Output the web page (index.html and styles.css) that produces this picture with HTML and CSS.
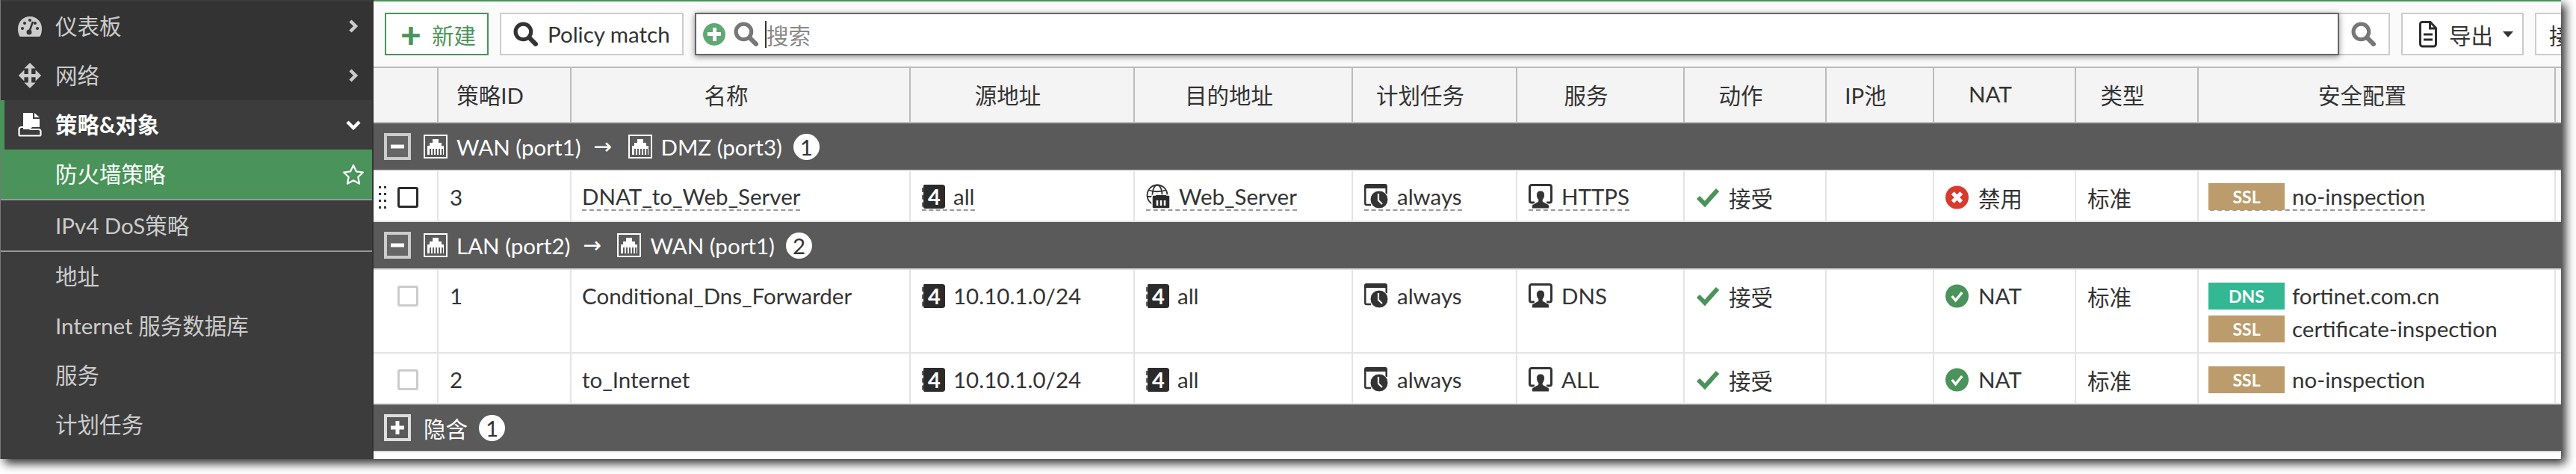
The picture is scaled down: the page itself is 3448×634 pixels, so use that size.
FILE: index.html
```html
<!DOCTYPE html>
<html lang="zh">
<head>
  <meta charset="UTF-8" />
  <title>防火墙策略</title>
  <link rel="stylesheet" href="styles.css">
</head>
<body>

  <!-- Icons -->
  <svg class="defs" width="0" height="0">
    <symbol id="i-gauge" viewBox="0 0 32 30">
      <path fill="currentColor" d="M16 2C7 2 0 9 0 18c0 4 .6 7 1.800 9.500.5 1 1.200 1.500 2.200 1.500h24c1 0 1.700-.5 2.200-1.500C31.400 25 32 22 32 18 32 9 25 2 16 2z"/>
      <g fill="#333"><circle cx="6" cy="18" r="2"/><circle cx="9" cy="11" r="2"/><circle cx="26" cy="18" r="2"/><circle cx="16" cy="7" r="2"/><circle cx="23" cy="11" r="2"/><circle cx="15" cy="23" r="3.500"/></g>
      <path stroke="#333" stroke-width="2.500" d="M15 23l5-14"/>
    </symbol>
    <symbol id="i-move" viewBox="0 0 32 36">
      <path stroke="currentColor" stroke-width="4.500" d="M16 4v28M4 18h24"/>
      <path fill="currentColor" d="M16 0l8 8H8zM16 36l-8-8h16zM0 18l8-8v16zM32 18l-8 8V10z"/>
    </symbol>
    <symbol id="i-policy" viewBox="0 0 32 32">
      <path fill="currentColor" d="M7 0h13v8h9v11H19l-3 3H7zM22 0l7 6h-7z"/>
      <path fill="none" stroke="currentColor" stroke-width="2.200" d="M1.500 29V22a3 3 0 0 1 3-3h9l3 3h11a3 3 0 0 1 3 3v4a1.500 1.500 0 0 1-1.500 1.500H3A1.500 1.500 0 0 1 1.500 29z"/>
    </symbol>
    <symbol id="i-right" viewBox="0 0 14 18">
      <path fill="none" stroke="currentColor" stroke-width="4.500" d="M3 2l7 7-7 7"/>
    </symbol>
    <symbol id="i-down" viewBox="0 0 20 14">
      <path fill="none" stroke="currentColor" stroke-width="4.500" d="M2 3l8 8 8-8"/>
    </symbol>
    <symbol id="i-star" viewBox="0 0 30 28">
      <path fill="none" stroke="currentColor" stroke-width="2.200" stroke-linejoin="round" d="M15 2l3.900 8.300 9 1.200-6.600 6.300 1.700 8.900-8-4.400-8 4.400 1.700-8.900-6.600-6.300 9-1.200z"/>
    </symbol>
    <symbol id="i-search" viewBox="0 0 32 32">
      <circle cx="13" cy="13" r="10" fill="none" stroke="currentColor" stroke-width="5"/>
      <path stroke="currentColor" stroke-width="6" stroke-linecap="round" d="M21 21l8 8"/>
    </symbol>
    <symbol id="i-port" viewBox="0 0 32 32">
      <rect x="1" y="1" width="30" height="30" fill="none" stroke="#fff" stroke-width="2"/>
      <path fill="#fff" d="M5 15h3v-4h4V6h8v5h4v4h3v12H5z"/>
      <path stroke="#5a5a5a" stroke-width="2" d="M9 19v8M13 19v8M17 19v8M21 19v8M25 19v8"/>
    </symbol>
    <symbol id="i-globe" viewBox="0 0 32 33">
      <g fill="none" stroke="#333" stroke-width="1.800">
        <circle cx="15" cy="15" r="13.500"/>
        <ellipse cx="15" cy="15" rx="6.500" ry="13.500"/>
        <path d="M3 8c7 3 17 3 24 0M1.500 17h27"/>
      </g>
      <rect x="8" y="15" width="24" height="18" rx="2" fill="#2b2b2b" stroke="#fff" stroke-width="1.500"/>
      <path stroke="#fff" stroke-width="2.500" d="M15 22v7M20 22v7M25 22v7"/>
      <path fill="#2b2b2b" d="M13 15h14v4H13z"/>
    </symbol>
    <symbol id="i-sched" viewBox="0 0 32 33">
      <path fill="#333" d="M3 0h25a3 3 0 0 1 3 3v3H0V3a3 3 0 0 1 3-3z"/>
      <path fill="none" stroke="#333" stroke-width="2.500" d="M1.300 5v21a2 2 0 0 0 2 2H9M29.700 5v8"/>
      <circle cx="20" cy="21" r="12" fill="#333" stroke="#fff" stroke-width="1"/>
      <path fill="none" stroke="#fff" stroke-width="2.200" d="M19 13v9l5 5"/>
    </symbol>
    <symbol id="i-serv" viewBox="0 0 32 33">
      <path fill="none" stroke="#333" stroke-width="3" d="M8 25H4a2.500 2.500 0 0 1-2.500-2.500V4A2.500 2.500 0 0 1 4 1.500h24A2.500 2.500 0 0 1 30.500 4v18.500A2.500 2.500 0 0 1 28 25h-4"/>
      <path fill="#333" stroke="#fff" stroke-width="1" d="M16 9c3.500 0 5.500 2.500 5.500 6 0 2.500-1 4.500-2.300 6v2.500l7.300 4c.8.500 1 1.500 1 3.500v2H4.500v-2c0-2 .2-3 1-3.500l7.300-4V21c-1.300-1.500-2.300-3.500-2.300-6 0-3.500 2-6 5.500-6z"/>
    </symbol>
    <symbol id="i-file" viewBox="0 0 24 36">
      <path fill="none" stroke="#2b2b2b" stroke-width="3" d="M4 1.500h11l7.500 8V31a3 3 0 0 1-3 3H4.500a3 3 0 0 1-3-3V4A2.500 2.500 0 0 1 4 1.500zM14.500 2v8h8"/>
      <path stroke="#2b2b2b" stroke-width="3" d="M6 18h12M6 25h12"/>
    </symbol>
    <symbol id="i-grip" viewBox="0 0 10 30">
      <path fill="#333" d="M0 0h3v3H0zM7 0h3v3H7zM0 9h3v3H0zM7 9h3v3H7zM0 18h3v3H0zM7 18h3v3H7zM0 27h3v3H0zM7 27h3v3H7z"/>
    </symbol>
    <symbol id="i-minus" viewBox="0 0 36 36">
      <rect x="2" y="2" width="32" height="32" fill="#666" stroke="#ccc" stroke-width="4"/>
      <path stroke="#fff" stroke-width="5" d="M9 18h18"/>
    </symbol>
    <symbol id="i-plusbox" viewBox="0 0 36 36">
      <rect x="2" y="2" width="32" height="32" fill="#5a5a5a" stroke="#ddd" stroke-width="4"/>
      <path stroke="#fff" stroke-width="5" d="M9 18h18M18 9v18"/>
    </symbol>
    <symbol id="i-check" viewBox="0 0 32 26">
      <path fill="none" stroke="#4a935a" stroke-width="6" d="M3 13l9 9L29 3"/>
    </symbol>
    <symbol id="i-ok" viewBox="0 0 32 32">
      <circle cx="16" cy="16" r="16" fill="#4a935a"/>
      <path fill="none" stroke="#fff" stroke-width="3.500" d="M9 16l5 6 9-11"/>
    </symbol>
    <symbol id="i-no" viewBox="0 0 32 32">
      <circle cx="16" cy="16" r="16" fill="#d83a2b"/>
      <path stroke="#fff" stroke-width="5.500" d="M10 10l12 12M22 10L10 22"/>
    </symbol>
  </svg>

  <div class="window">

    <!-- Sidebar -->
    <nav class="sidebar">
      <a class="item top"><svg class="ico-nav"><use href="#i-gauge"/></svg><span class="label">仪表板</span><svg class="ico-chev"><use href="#i-right"/></svg></a>
      <a class="item top"><svg class="ico-nav"><use href="#i-move"/></svg><span class="label">网络</span><svg class="ico-chev"><use href="#i-right"/></svg></a>
      <a class="item section"><svg class="ico-nav"><use href="#i-policy"/></svg><span class="label">策略&amp;对象</span><svg class="ico-down"><use href="#i-down"/></svg></a>
      <a class="item sub active"><span class="label">防火墙策略</span><svg class="ico-star"><use href="#i-star"/></svg></a>
      <a class="item sub lined"><span class="label">IPv4 DoS策略</span></a>
      <a class="item sub"><span class="label">地址</span></a>
      <a class="item sub"><span class="label">Internet 服务数据库</span></a>
      <a class="item sub"><span class="label">服务</span></a>
      <a class="item sub"><span class="label">计划任务</span></a>
    </nav>

    <main class="content">

      <!-- Toolbar -->
      <div class="toolbar">
        <button class="btn btn-new"><span class="plus">+</span>新建</button>
        <button class="btn btn-match"><svg class="ico-search"><use href="#i-search"/></svg>Policy match</button>
        <div class="search">
          <div class="search-box">
            <span class="search-add"></span>
            <svg class="ico-search grey"><use href="#i-search"/></svg>
            <span class="caret-line"></span><span class="placeholder">搜索</span>
          </div>
          <button class="btn search-go"><svg class="ico-search grey"><use href="#i-search"/></svg></button>
        </div>
        <button class="btn btn-export"><svg class="ico-file"><use href="#i-file"/></svg>导出<span class="tri"></span></button>
        <button class="btn btn-more">接</button>
      </div>

      <!-- Policy table -->
      <table class="policies">
        <colgroup>
          <col class="c0"><col class="c1"><col class="c2"><col class="c3"><col class="c4"><col class="c5"><col class="c6">
          <col class="c7"><col class="c8"><col class="c9"><col class="c10"><col class="c11"><col class="c12">
        </colgroup>
        <thead>
          <tr>
            <th></th><th>策略ID</th><th>名称</th><th>源地址</th><th>目的地址</th><th>计划任务</th><th>服务</th>
            <th>动作</th><th>IP池</th><th>NAT</th><th>类型</th><th>安全配置</th><th class="end"></th>
          </tr>
        </thead>
        <tbody>
          <tr class="group">
            <td colspan="13"><div class="group-in">
              <svg class="ico-box"><use href="#i-minus"/></svg>
              <svg class="ico-port"><use href="#i-port"/></svg>WAN (port1)
              <span class="arrow">→</span>
              <svg class="ico-port"><use href="#i-port"/></svg>DMZ (port3)
              <span class="count">1</span>
            </div></td>
          </tr>
          <tr class="row hover">
            <td><div class="sel"><svg class="grip"><use href="#i-grip"/></svg><span class="check"></span></div></td>
            <td><div class="val">3</div></td>
            <td class="name"><div class="val"><span class="lnk">DNAT_to_Web_Server</span></div></td>
            <td><div class="val"><span class="lnk"><span class="v4">4</span>all</span></div></td>
            <td><div class="val"><span class="lnk"><svg class="ico-obj"><use href="#i-globe"/></svg>Web_Server</span></div></td>
            <td><div class="val"><span class="lnk"><svg class="ico-obj"><use href="#i-sched"/></svg>always</span></div></td>
            <td><div class="val"><span class="lnk"><svg class="ico-obj"><use href="#i-serv"/></svg>HTTPS</span></div></td>
            <td><div class="val"><svg class="ico-check"><use href="#i-check"/></svg>接受</div></td>
            <td></td>
            <td><div class="val"><svg class="ico-state"><use href="#i-no"/></svg>禁用</div></td>
            <td><div class="val">标准</div></td>
            <td><div class="val"><span class="lnk"><span class="chip ssl">SSL</span>no-inspection</span></div></td>
            <td></td>
          </tr>
          <tr class="group">
            <td colspan="13"><div class="group-in">
              <svg class="ico-box"><use href="#i-minus"/></svg>
              <svg class="ico-port"><use href="#i-port"/></svg>LAN (port2)
              <span class="arrow">→</span>
              <svg class="ico-port"><use href="#i-port"/></svg>WAN (port1)
              <span class="count">2</span>
            </div></td>
          </tr>
          <tr class="row tall">
            <td><div class="sel"><svg class="grip"><use href="#i-grip"/></svg><span class="check"></span></div></td>
            <td><div class="val">1</div></td>
            <td class="name"><div class="val">Conditional_Dns_Forwarder</div></td>
            <td><div class="val"><span class="v4">4</span>10.10.1.0/24</div></td>
            <td><div class="val"><span class="v4">4</span>all</div></td>
            <td><div class="val"><svg class="ico-obj"><use href="#i-sched"/></svg>always</div></td>
            <td><div class="val"><svg class="ico-obj"><use href="#i-serv"/></svg>DNS</div></td>
            <td><div class="val"><svg class="ico-check"><use href="#i-check"/></svg>接受</div></td>
            <td></td>
            <td><div class="val"><svg class="ico-state"><use href="#i-ok"/></svg>NAT</div></td>
            <td><div class="val">标准</div></td>
            <td>
              <div class="val"><span class="chip dns">DNS</span>fortinet.com.cn</div>
              <div class="val next"><span class="chip ssl">SSL</span>certificate-inspection</div>
            </td>
            <td></td>
          </tr>
          <tr class="row">
            <td><div class="sel"><svg class="grip"><use href="#i-grip"/></svg><span class="check"></span></div></td>
            <td><div class="val">2</div></td>
            <td class="name"><div class="val">to_Internet</div></td>
            <td><div class="val"><span class="v4">4</span>10.10.1.0/24</div></td>
            <td><div class="val"><span class="v4">4</span>all</div></td>
            <td><div class="val"><svg class="ico-obj"><use href="#i-sched"/></svg>always</div></td>
            <td><div class="val"><svg class="ico-obj"><use href="#i-serv"/></svg>ALL</div></td>
            <td><div class="val"><svg class="ico-check"><use href="#i-check"/></svg>接受</div></td>
            <td></td>
            <td><div class="val"><svg class="ico-state"><use href="#i-ok"/></svg>NAT</div></td>
            <td><div class="val">标准</div></td>
            <td><div class="val"><span class="chip ssl">SSL</span>no-inspection</div></td>
            <td></td>
          </tr>
          <tr class="group">
            <td colspan="13"><div class="group-in">
              <svg class="ico-box"><use href="#i-plusbox"/></svg>隐含
              <span class="count">1</span>
            </div></td>
          </tr>
        </tbody>
      </table>
    </main>
  </div>
</body>
</html>
```

FILE: styles.css
```css
* { margin: 0; padding: 0; box-sizing: border-box; }
html, body {
  width: 100%;
  height: 100%;
  background: #fff;
  overflow: hidden;
}
body {
  font-family: Lato, "Noto Sans CJK SC", sans-serif;
  font-size: 29.5px;
  color: #333;
}
.defs { display: block; height: 0; }

.window {
  display: flex;
  width: 3428px;
  height: 614px;
  overflow: hidden;
  box-shadow: 6px 6px 12px rgba(0, 0, 0, 0.8);
}

/* Sidebar */
.sidebar {
  flex: none;
  width: 500px;
  padding-top: 2px;
  background: #3c3c3c;
  border-left: 1px solid #777;
  border-right: 2px solid #333;
  color: #ccc;
}
.item {
  display: flex;
  align-items: center;
  height: 66px;
  padding: 0 10px 0 73px;
}
.item.top { padding-left: 23px; background: #333; }
.item .label { flex: 1; padding-bottom: 4px; }
.item.section {
  padding-left: 18px;
  border-left: 6px solid #4a935a;
  margin-left: -1px;
  color: #fff;
  font-weight: 700;
}
.ico-nav { width: 32px; height: 34px; margin-right: 18px; flex: none; }
.ico-chev { width: 14px; height: 18px; margin-right: 8px; }
.ico-down { width: 20px; height: 14px; margin-right: 5px; }
.ico-star { width: 30px; height: 28px; }
.item.active { background: #4a935a; color: #fff; }
.item.lined {
  height: 71px;
  border-top: 2px solid #999;
  border-bottom: 2px solid #999;
}

/* Toolbar */
.content { flex: 1; min-width: 0; background: #fff; }
.toolbar {
  display: flex;
  gap: 15px;
  height: 91px;
  padding: 15px 0 0 15px;
  background: #fafafa;
  border-top: 2px solid #4a935a;
  border-bottom: 2px solid #bbb;
  overflow: hidden;
}
.btn {
  display: flex;
  flex: none;
  align-items: center;
  height: 57px;
  background: #fff;
  border: 2px solid #ccc;
  font: inherit;
  color: #333;
}
.btn-new {
  width: 139px;
  padding-left: 19px;
  border-color: #4a935a;
  color: #4a935a;
}
.plus {
  width: 28px;
  margin-right: 14px;
  font-size: 48px;
  font-weight: 900;
  line-height: 40px;
  text-align: center;
}
.btn-match { width: 246px; padding-left: 16px; }
.ico-search { width: 33px; height: 33px; flex: none; margin-right: 13px; }
.ico-search.grey { color: #777; margin-right: 0; }
.search { display: flex; flex: none; width: 2269px; }
.search-box {
  display: flex;
  flex: none;
  align-items: center;
  width: 2201px;
  height: 57px;
  padding-left: 9px;
  background: #fff;
  border: 2px solid #666;
  box-shadow: 0 2px 8px rgba(0, 0, 0, 0.45);
  position: relative;
}
.search-add {
  width: 30px;
  height: 30px;
  margin-right: 11px;
  border-radius: 50%;
  background:
    linear-gradient(#fff, #fff) center / 18px 5px no-repeat,
    linear-gradient(#fff, #fff) center / 5px 18px no-repeat,
    #5fa874;
}
.caret-line { width: 2px; height: 36px; margin-left: 9px; background: #333; }
.placeholder { color: #888; }
.search-go {
  flex: 1;
  justify-content: flex-end;
  padding-right: 17px;
  border-left: 0;
}
.btn-export { width: 164px; padding-left: 22px; }
.ico-file { width: 24px; height: 36px; margin-right: 16px; }
.tri {
  width: 0;
  height: 0;
  margin-left: 13px;
  border-left: 7px solid transparent;
  border-right: 7px solid transparent;
  border-top: 8px solid #333;
}
.btn-more { width: 120px; padding-left: 17px; }

/* Table */
.policies {
  width: 2928px;
  table-layout: fixed;
  border-collapse: separate;
  border-spacing: 0;
}
.c0 { width: 87px; }
.c1 { width: 178px; }
.c2 { width: 454px; }
.c3 { width: 300px; }
.c4 { width: 292px; }
.c5 { width: 220px; }
.c6 { width: 224px; }
.c7 { width: 190px; }
.c8 { width: 144px; }
.c9 { width: 190px; }
.c10 { width: 164px; }
.c11 { width: 478px; }
.c12 { width: 7px; }
th {
  height: 74px;
  padding: 0 38px 3px 0;
  background: #f4f4f4;
  border-right: 2px solid #bbb;
  border-bottom: 2px solid #bbb;
  font-weight: 400;
}
th.end { border-right: 0; padding: 0; }

.group td { height: 64px; background: #5a5a5a; border-bottom: 2px solid #ddd; }
.group-in {
  display: flex;
  align-items: center;
  gap: 12px;
  padding-left: 14px;
  color: #fff;
}
.ico-box { width: 36px; height: 36px; margin-right: 5px; }
.ico-port { width: 32px; height: 32px; }
.arrow { width: 29px; margin: 0 5px; font-family: "DejaVu Sans", sans-serif; }
.count {
  width: 35px;
  height: 35px;
  margin-left: 3px;
  border-radius: 50%;
  background: #fff;
  color: #333;
  line-height: 35px;
  text-align: center;
}

.row td {
  height: 68px;
  padding: 16px 0 0 15px;
  vertical-align: top;
  border-right: 2px solid #e4e4e4;
  border-bottom: 2px solid #e4e4e4;
  overflow: hidden;
}
.row td.name { padding-left: 14px; }
.row td:last-child { border-right: 0; }
.row.tall td { height: 112px; }
.val {
  display: flex;
  align-items: center;
  height: 37px;
  white-space: nowrap;
}
.val.next { margin-top: 7px; }
.lnk {
  display: inline-flex;
  align-items: center;
  height: 37px;
  border-bottom: 2px dashed #999;
}
.sel { display: flex; align-items: center; height: 37px; margin-left: -8px; }
.grip { width: 10px; height: 30px; margin-right: 15px; visibility: hidden; }
.hover .grip { visibility: visible; }
.check {
  width: 28px;
  height: 28px;
  background: #fff;
  border: 3px solid #ccc;
  border-radius: 3px;
}
.hover .check { border-color: #2b2b2b; }

.v4 {
  width: 31px;
  height: 32px;
  margin-right: 11px;
  background: #2b2b2b;
  background-clip: padding-box;
  border-left: 2px dashed #666;
  border-radius: 3px;
  color: #fff;
  font-size: 29px;
  font-weight: 700;
  line-height: 32px;
  text-align: center;
}
.ico-obj { width: 32px; height: 33px; margin-right: 12px; flex: none; }
.ico-check { width: 32px; height: 26px; margin-right: 12px; flex: none; }
.ico-state { width: 31px; height: 32px; margin-right: 13px; flex: none; }
.chip {
  flex: none;
  width: 102px;
  height: 36px;
  margin: 0 10px 0 -2px;
  color: #fff;
  font-size: 23px;
  font-weight: 700;
  line-height: 36px;
  text-align: center;
}
.chip.ssl { background: #bc9c6c; }
.chip.dns { background: #34b894; }
```
